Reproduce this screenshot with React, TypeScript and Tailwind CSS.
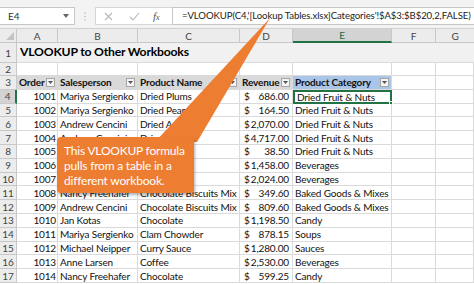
const cols = "grid grid-cols-[17px_41px_80px_102px_53px_99px_44px_1fr]";
const line = "border-r border-b border-[#dadada]";

const rows: [string, string, string, string, string][] = [
  ["1001", "Mariya Sergienko", "Dried Plums", "686.00", "Dried Fruit & Nuts"],
  ["1002", "Mariya Sergienko", "Dried Pears", "164.50", "Dried Fruit & Nuts"],
  ["1003", "Andrew Cencini", "Dried Apples", "2,070.00", "Dried Fruit & Nuts"],
  ["1004", "Andrew Cencini", "Dried Apples", "4,717.00", "Dried Fruit & Nuts"],
  ["1005", "Nancy Freehafer", "Dried Pears", "38.50", "Dried Fruit & Nuts"],
  ["1006", "Jan Kotas", "Green Tea", "1,458.00", "Beverages"],
  ["1007", "Anne Larsen", "Coffee", "2,024.00", "Beverages"],
  ["1008", "Nancy Freehafer", "Chocolate Biscuits Mix", "349.60", "Baked Goods & Mixes"],
  ["1009", "Andrew Cencini", "Chocolate Biscuits Mix", "809.60", "Baked Goods & Mixes"],
  ["1010", "Jan Kotas", "Chocolate", "1,198.50", "Candy"],
  ["1011", "Mariya Sergienko", "Clam Chowder", "878.15", "Soups"],
  ["1012", "Michael Neipper", "Curry Sauce", "1,280.00", "Sauces"],
  ["1013", "Anne Larsen", "Coffee", "2,530.00", "Beverages"],
  ["1014", "Nancy Freehafer", "Chocolate", "599.25", "Candy"],
];

function Filter() {
  return (
    <span className="ml-auto mr-[2px] flex h-[9px] w-[9px] shrink-0 items-center justify-center border border-[#a6a6a6] bg-[#f4f4f4]">
      <svg width="5" height="3" viewBox="0 0 5 3"><path d="M0 0h5L2.5 3z" fill="#555" /></svg>
    </span>
  );
}

function HeadCell({ label, blue }: { label: string; blue?: boolean }) {
  return (
    <div className={`${line} flex items-center pl-[2px] font-bold ${blue ? "bg-[#a9c6e8]" : "bg-[#d9d9d9]"}`}>
      <span className="whitespace-nowrap">{label}</span>
      <Filter />
    </div>
  );
}

export default function App() {
  return (
    <div className="relative h-[284px] w-[474px] overflow-hidden bg-white font-['Lato',sans-serif] text-[10px] tracking-[-0.15px] leading-none text-[#111]">
      {/* formula bar */}
      <div className="flex h-[29px] items-start border-b border-[#d0d0d0] bg-[#f3f3f3] pt-[7px]">
        <div className="flex h-[18px] w-[75px] shrink-0 items-center border border-l-0 border-[#c6c6c6] bg-white pl-[8px] pr-[5px] text-[#333]">
          <span>E4</span>
          <svg className="ml-auto" width="6" height="4" viewBox="0 0 6 4"><path d="M0 0h6L3 4z" fill="#666" /></svg>
        </div>
        <div className="flex h-[18px] w-[20px] shrink-0 items-center justify-center">
          <svg width="2" height="9" viewBox="0 0 2 9"><circle cx="1" cy="1" r="0.8" fill="#bbb" /><circle cx="1" cy="4.5" r="0.8" fill="#bbb" /><circle cx="1" cy="8" r="0.8" fill="#bbb" /></svg>
        </div>
        <div className="flex h-[18px] w-[77px] shrink-0 items-center border border-r-0 border-[#d6d6d6] bg-white">
          <svg className="ml-[8px]" width="9" height="9" viewBox="0 0 9 9" stroke="#b8b8b8" strokeWidth="1.1"><path d="M1 1l7 7M8 1L1 8" /></svg>
          <svg className="ml-[16px]" width="11" height="9" viewBox="0 0 11 9" fill="none" stroke="#b8b8b8" strokeWidth="1.1"><path d="M1 5l3 3 6-7" /></svg>
          <span className="ml-[13px] font-['Liberation_Serif',serif] text-[11px] italic text-[#555]">f<span className="text-[8px]">x</span></span>
        </div>
        <div className="flex h-[18px] min-w-0 flex-1 items-center overflow-hidden border border-r-0 border-[#c6c6c6] bg-white pl-[9px] whitespace-nowrap text-[9.6px] tracking-[-0.1px] text-[#222]">
          =VLOOKUP(C4,'[Lookup Tables.xlsx]Categories'!$A$3:$B$20,2,FALSE)
        </div>
      </div>

      {/* column headers */}
      <div className={`${cols} h-[14px] bg-[#ececec] text-[#444]`}>
        <div className="relative border-r border-b border-[#c8c8c8]">
          <svg className="absolute bottom-[2px] right-[2px]" width="8" height="8" viewBox="0 0 8 8"><path d="M8 0v8H0z" fill="#c4c4c4" /></svg>
        </div>
        {["A", "B", "C", "D"].map((c) => (
          <div key={c} className="flex items-center justify-center border-r border-b border-[#c8c8c8]">{c}</div>
        ))}
        <div className="flex items-center justify-center border-r border-b-2 border-r-[#c8c8c8] border-b-[#217346] bg-[#d3d3d3] text-[#1e6b40]">E</div>
        <div className="flex items-center justify-center border-r border-b border-[#c8c8c8]">F</div>
        <div className="flex items-center justify-center border-b border-[#c8c8c8]">G</div>
      </div>

      {/* row 1 */}
      <div className={`${cols} h-[20px]`}>
        <div className="flex items-center justify-center border-r border-b border-[#c8c8c8] bg-[#ececec] text-[#444]">1</div>
        <div className="col-span-7 flex items-center border-b border-[#dadada] bg-[#f1f1f1] pl-[3px] text-[12.2px] font-bold tracking-[-0.2px] text-black">
          VLOOKUP to Other Workbooks
        </div>
      </div>

      {/* row 2 */}
      <div className={`${cols} h-[13px]`}>
        <div className="flex items-center justify-center border-r border-b border-[#c8c8c8] bg-[#ececec] text-[#444]">2</div>
        {[0, 1, 2, 3, 4, 5, 6].map((i) => (
          <div key={i} className={line} />
        ))}
      </div>

      {/* row 3 table header */}
      <div className={`${cols} h-[13.8px]`}>
        <div className="flex items-center justify-center border-r border-b border-[#c8c8c8] bg-[#ececec] text-[#444]">3</div>
        <HeadCell label="Order" />
        <HeadCell label="Salesperson" />
        <HeadCell label="Product Name" />
        <HeadCell label="Revenue" />
        <HeadCell label="Product Category" blue />
        <div className={line} />
        <div className={line} />
      </div>

      {rows.map((r, i) => {
        const sel = i === 0;
        return (
          <div key={r[0]} className={`${cols} h-[13.8px]`}>
            <div
              className={`flex items-center justify-center border-b border-[#c8c8c8] text-[#444] ${
                sel ? "border-r-2 border-r-[#217346] bg-[#d3d3d3]" : "border-r border-r-[#c8c8c8] bg-[#ececec]"
              }`}
            >
              {i + 4}
            </div>
            <div className={`${line} flex items-center justify-end pr-[1px]`}>{r[0]}</div>
            <div className={`${line} flex items-center overflow-hidden whitespace-nowrap pl-[2px]`}>{r[1]}</div>
            <div className={`${line} flex items-center overflow-hidden whitespace-nowrap pl-[2px]`}>{r[2]}</div>
            <div className={`${line} flex items-center pl-[4px] pr-[3px]`}>
              <span>$</span>
              <span className="ml-auto">{r[3]}</span>
            </div>
            <div
              className={`relative flex items-center whitespace-nowrap pl-[2px] ${
                sel ? "border-2 border-[#217346]" : line
              }`}
            >
              {r[4]}
              {sel && <span className="absolute -bottom-[3px] -right-[3px] h-[4px] w-[4px] border border-white bg-[#217346]" />}
            </div>
            <div className={line} />
            <div className={line} />
          </div>
        );
      })}

      {/* callout */}
      <svg className="pointer-events-none absolute left-0 top-0" width="474" height="284" viewBox="0 0 474 284">
        <polygon points="270,18 155,142 197,142" fill="#ed7d31" />
      </svg>
      <div className="absolute left-[57px] top-[137px] h-[56px] w-[137px] whitespace-nowrap rounded-[4px] bg-[#ed7d31] pl-[7px] pt-[6px] text-[12px] leading-[15px] tracking-[-0.2px] text-white shadow-[1px_2px_3px_rgba(0,0,0,0.3)]">
        <div>This VLOOKUP formula</div>
        <div>pulls from a table in a</div>
        <div>different workbook.</div>
      </div>
    </div>
  );
}
